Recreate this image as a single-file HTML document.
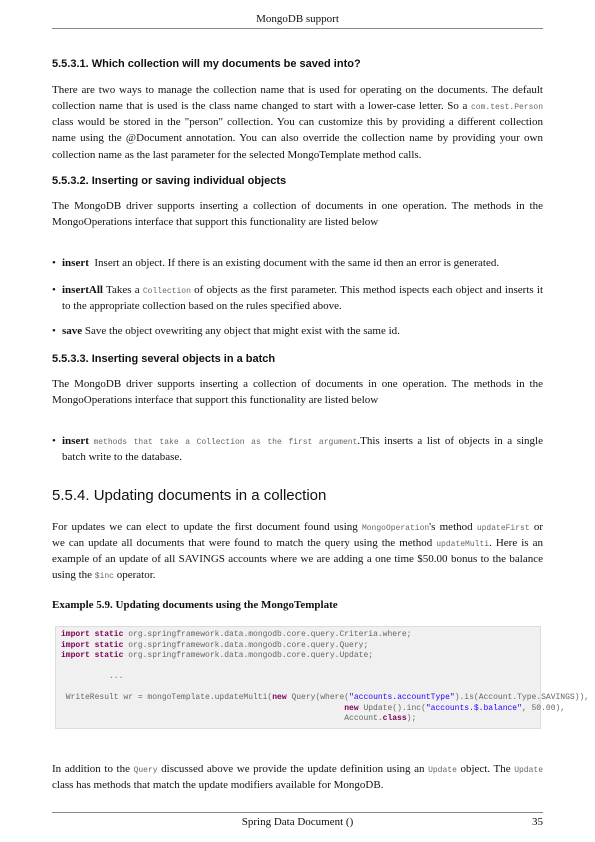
<!DOCTYPE html>
<html><head><meta charset="utf-8"><style>
body{margin:0;width:595px;height:842px;background:#fff;position:relative;font-family:"Liberation Serif",serif;color:#111;overflow:hidden}
.a{position:absolute;left:52px;width:491px;font-size:11px;line-height:16px}
.j{text-align:justify;text-align-last:justify}
.h4{font-family:"Liberation Sans",sans-serif;font-weight:bold;font-size:11px}
.h3{font-family:"Liberation Sans",sans-serif;font-size:15px;line-height:18px}
code,.m{font-family:"Liberation Mono",monospace;font-size:8px;color:#666}
.b{left:52px}
.b:before{content:"•";position:absolute;left:0}
.bi{padding-left:10px;box-sizing:border-box}
.code{position:absolute;left:55px;top:626px;width:486px;height:103px;background:#f0f0f0;border:1px solid #ddd;box-sizing:border-box}
.code pre{margin:0;position:absolute;left:5px;top:3px;font-family:"Liberation Mono",monospace;font-size:8px;line-height:10.5px;color:#666;white-space:pre}
.k{color:#7f0055;font-weight:bold}.s{color:#2a00ff}
.rule{position:absolute;left:52px;width:491px;height:0;border-top:1px solid #888}
</style></head><body>
<div class="a" style="top:11px;text-align:center;font-size:11px">MongoDB support</div>
<div class="rule" style="top:28px"></div>

<div class="a h4" style="top:56px">5.5.3.1. Which collection will my documents be saved into?</div>
<div class="a j" style="top:82px">There are two ways to manage the collection name that is used for operating on the documents. The default</div>
<div class="a j" style="top:98px">collection name that is used is the class name changed to start with a lower-case letter. So a <code>com.test.Person</code></div>
<div class="a j" style="top:114px">class would be stored in the "person" collection. You can customize this by providing a different collection</div>
<div class="a j" style="top:130px">name using the @Document annotation. You can also override the collection name by providing your own</div>
<div class="a" style="top:147px">collection name as the last parameter for the selected MongoTemplate method calls.</div>

<div class="a h4" style="top:173px">5.5.3.2. Inserting or saving individual objects</div>
<div class="a j" style="top:198px">The MongoDB driver supports inserting a collection of documents in one operation. The methods in the</div>
<div class="a" style="top:214px">MongoOperations interface that support this functionality are listed below</div>

<div class="a b bi" style="top:255px"><b>insert</b>&nbsp; Insert an object. If there is an existing document with the same id then an error is generated.</div>
<div class="a b bi j" style="top:282px"><b>insertAll</b> Takes a <code>Collection</code> of objects as the first parameter. This method ispects each object and inserts it</div>
<div class="a bi" style="top:298px">to the appropriate collection based on the rules specified above.</div>
<div class="a b bi" style="top:323px"><b>save</b> Save the object ovewriting any object that might exist with the same id.</div>

<div class="a h4" style="top:351px">5.5.3.3. Inserting several objects in a batch</div>
<div class="a j" style="top:376px">The MongoDB driver supports inserting a collection of documents in one operation. The methods in the</div>
<div class="a" style="top:392px">MongoOperations interface that support this functionality are listed below</div>

<div class="a b bi j" style="top:433px"><b>insert</b> <code>methods that take a Collection as the first argument</code>.This inserts a list of objects in a single</div>
<div class="a bi" style="top:449px">batch write to the database.</div>

<div class="a h3" style="top:487px">5.5.4. Updating documents in a collection</div>
<div class="a j" style="top:519px">For updates we can elect to update the first document found using <code>MongoOperation</code>'s method <code>updateFirst</code> or</div>
<div class="a j" style="top:535px">we can update all documents that were found to match the query using the method <code>updateMulti</code>. Here is an</div>
<div class="a j" style="top:551px">example of an update of all SAVINGS accounts where we are adding a one time $50.00 bonus to the balance</div>
<div class="a" style="top:567px">using the <code>$inc</code> operator.</div>

<div class="a" style="top:597px;font-weight:bold">Example 5.9. Updating documents using the MongoTemplate</div>

<div class="code"><pre><span class="k">import static</span> org.springframework.data.mongodb.core.query.Criteria.where;
<span class="k">import static</span> org.springframework.data.mongodb.core.query.Query;
<span class="k">import static</span> org.springframework.data.mongodb.core.query.Update;

          ...

 WriteResult wr = mongoTemplate.updateMulti(<span class="k">new</span> Query(where(<span class="s">"accounts.accountType"</span>).is(Account.Type.SAVINGS)),
                                                           <span class="k">new</span> Update().inc(<span class="s">"accounts.$.balance"</span>, 50.00),
                                                           Account.<span class="k">class</span>);</pre></div>

<div class="a j" style="top:761px">In addition to the <code>Query</code> discussed above we provide the update definition using an <code>Update</code> object. The <code>Update</code></div>
<div class="a" style="top:777px">class has methods that match the update modifiers available for MongoDB.</div>

<div class="rule" style="top:812px"></div>
<div class="a" style="top:814px;text-align:center">Spring Data Document ()</div>
<div class="a" style="top:814px;text-align:right">35</div>
</body></html>
